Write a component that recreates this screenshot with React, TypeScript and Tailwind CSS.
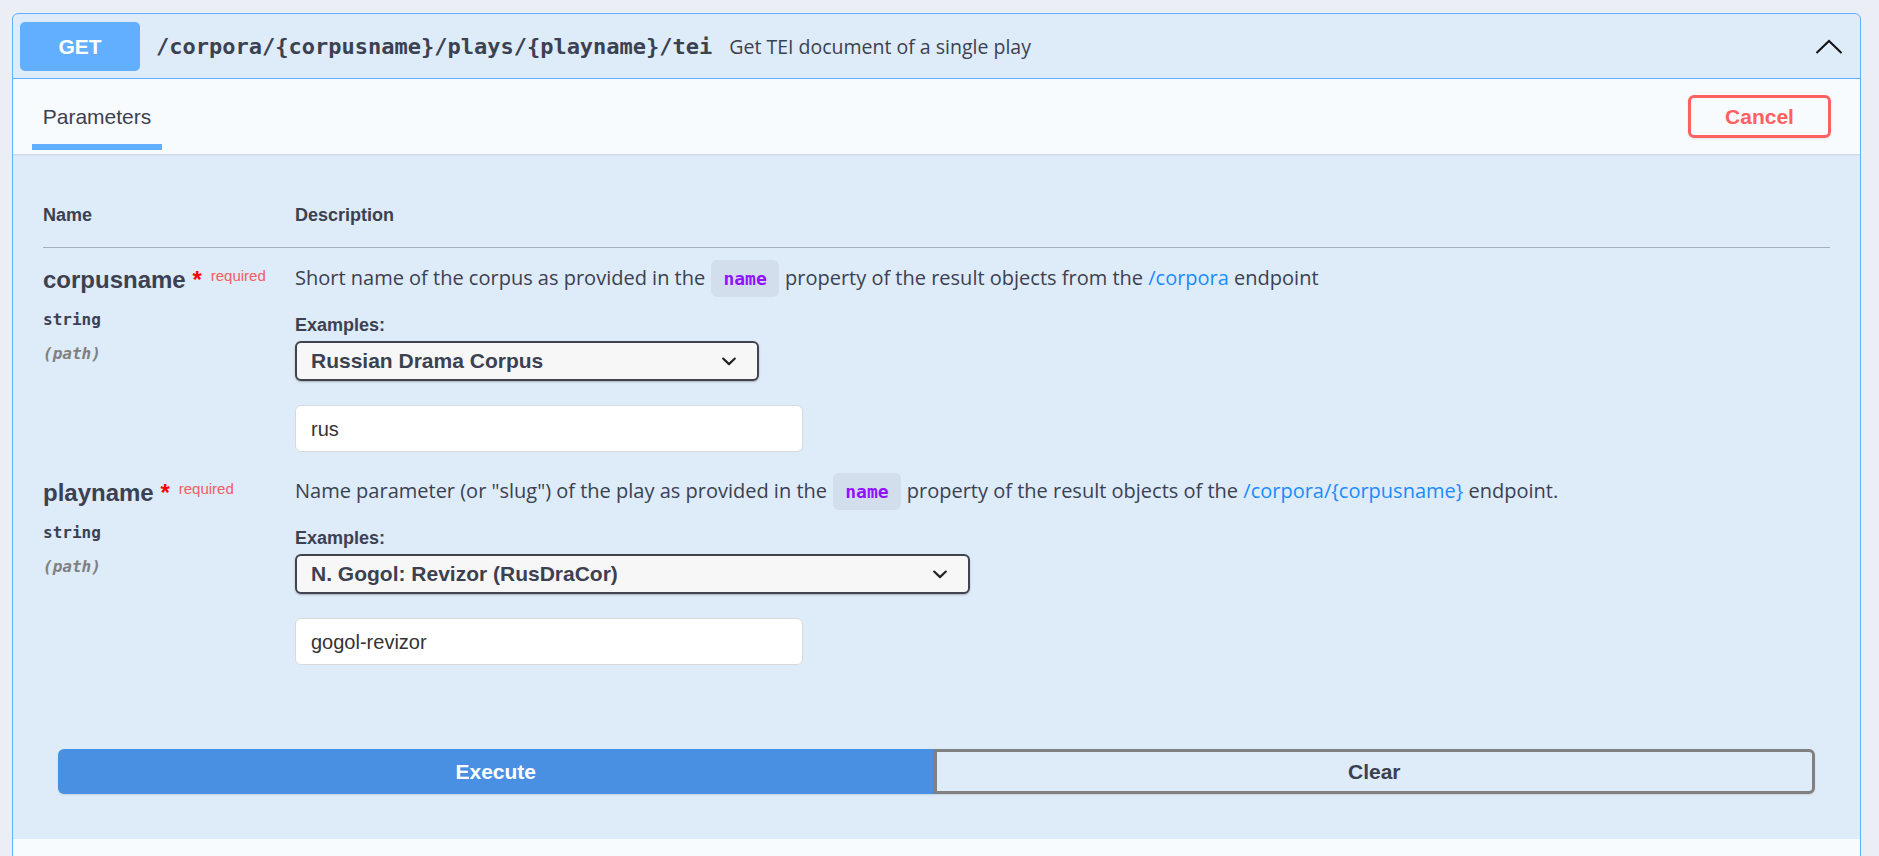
import React from "react";

const sans = "font-['Liberation_Sans',Arial,sans-serif]";
const open = "font-['Open_Sans',sans-serif]";
const mono = "font-['DejaVu_Sans_Mono',monospace]";

function Chip({ children }: { children: React.ReactNode }) {
  return (
    <span
      className={`${mono} mx-[1px] rounded-[6px] bg-[#d2deec] px-[12px] py-[8px] text-[18px] leading-[22px] font-bold text-[#9012fe]`}
    >
      {children}
    </span>
  );
}

function Link({ children }: { children: React.ReactNode }) {
  return <a className="text-[#1a8cff]">{children}</a>;
}

function SelectChevron() {
  return (
    <svg width="30" height="30" viewBox="0 0 20 20" className="shrink-0">
      <path
        fill="#222"
        d="M13.418 7.859a.695.695 0 0 1 .978 0 .68.68 0 0 1 0 .969l-3.908 3.83a.697.697 0 0 1-.979 0l-3.908-3.83a.68.68 0 0 1 0-.969.695.695 0 0 1 .978 0L10 11l3.418-3.141z"
      />
    </svg>
  );
}

type ParamProps = {
  name: string;
  description: React.ReactNode;
  example: string;
  selectWidth: string;
  value: string;
  top: string;
};

function ParamRow({ name, description, example, selectWidth, value, top }: ParamProps) {
  return (
    <div className={`flex ${top}`}>
      <div className="w-[252px] shrink-0">
        <div className={`${sans} mt-[2px] flex items-start text-[#3b4151]`}>
          <span className="text-[24px] leading-[30px] font-bold">
            {name}
            <span className="text-[#ff0000]">&nbsp;*</span>
          </span>
          <span className="ml-[9px] mt-[3px] text-[15px] leading-[15px] text-[#f25d63]">required</span>
        </div>
        <div className={`${mono} mt-[15px] text-[16px] leading-[20px] font-bold text-[#3b4151]`}>string</div>
        <div className={`${mono} mt-[14px] text-[16px] leading-[20px] italic font-bold text-[#808080]`}>(path)</div>
      </div>
      <div className="min-w-0 flex-1">
        <p className={`${open} text-[20px] leading-[30px] text-[#3b4151]`}>{description}</p>
        <div className={`${sans} mt-[22px] text-[18px] leading-[20px] font-bold text-[#3b4151]`}>Examples:</div>
        <div
          className={`${sans} mt-[6px] flex h-[40px] ${selectWidth} items-center justify-between rounded-[6px] border-2 border-[#41444e] bg-[#f7f7f7] pl-[14px] pr-[13px] text-[21px] font-bold text-[#3b4151] shadow-[0_1px_2px_rgba(0,0,0,0.25)]`}
        >
          <span>{example}</span>
          <SelectChevron />
        </div>
        <div
          className={`${sans} mt-[24px] flex h-[47px] w-[508px] items-center rounded-[6px] border border-[#d9d9d9] bg-white px-[15px] text-[20px] text-[#333]`}
        >
          {value}
        </div>
      </div>
    </div>
  );
}

export default function App() {
  return (
    <div className="min-h-screen bg-[#ebeef5] pl-[12px] pr-[18px] pt-[13px]">
      <div className="overflow-hidden rounded-[6px] border border-[#61affe] bg-[#deebf8]">
        {/* summary */}
        <div className="flex items-center border-b border-[#61affe] pb-[7px] pl-[7px] pr-[17px] pt-[8px]">
          <div
            className={`${sans} flex h-[49px] w-[120px] items-center justify-center rounded-[5px] bg-[#61affe] text-[21px] font-bold text-white`}
          >
            GET
          </div>
          <span className={`${mono} ml-[16px] text-[22px] font-bold text-[#3b4151]`}>
            /corpora/{"{corpusname}"}/plays/{"{playname}"}/tei
          </span>
          <span className={`${open} ml-[17px] text-[19.5px] text-[#3b4151]`}>Get TEI document of a single play</span>
          <svg width="28" height="16" viewBox="0 0 28 16" className="ml-auto">
            <polyline points="1.5,14 14,2 26.5,14" fill="none" stroke="#111" strokeWidth="2" />
          </svg>
        </div>

        {/* tab header */}
        <div className="relative flex items-center justify-between bg-[#f8fbfe] pl-[19px] pr-[29px] shadow-[0_1px_2px_rgba(0,0,0,0.1)]">
          <div className="flex w-[130px] flex-col items-center pt-[26px]">
            <span className={`${sans} text-[21px] leading-[24px] text-[#3b4151]`}>Parameters</span>
            <div className="mb-[4px] mt-[15px] h-[6px] w-full bg-[#61affe]" />
          </div>
          <button
            className={`${sans} flex h-[43px] w-[143px] items-center justify-center rounded-[6px] border-[3px] border-[#ff6060] bg-transparent text-[21px] font-bold text-[#ff6060] shadow-[0_1px_2px_rgba(0,0,0,0.1)]`}
          >
            Cancel
          </button>
        </div>

        {/* parameters */}
        <div className="px-[30px]">
          <div className={`${sans} flex border-b border-[#a6b0bd] pb-[22px] pt-[51px] text-[18px] leading-[20px] font-bold text-[#3b4151]`}>
            <div className="w-[252px]">Name</div>
            <div>Description</div>
          </div>
          <ParamRow
            top="pt-[15px]"
            name="corpusname"
            description={
              <>
                Short name of the corpus as provided in the <Chip>name</Chip> property of the result objects from the{" "}
                <Link>/corpora</Link> endpoint
              </>
            }
            example="Russian Drama Corpus"
            selectWidth="w-[464px]"
            value="rus"
          />
          <ParamRow
            top="pt-[24px]"
            name="playname"
            description={
              <>
                Name parameter (or "slug") of the play as provided in the <Chip>name</Chip> property of the result
                objects of the <Link>/corpora/{"{corpusname}"}</Link> endpoint.
              </>
            }
            example="N. Gogol: Revizor (RusDraCor)"
            selectWidth="w-[675px]"
            value="gogol-revizor"
          />
        </div>

        {/* execute */}
        <div className="flex px-[45px] pb-[45px] pt-[84px]">
          <button
            className={`${sans} h-[45px] flex-1 rounded-l-[6px] bg-[#4990e2] text-[21px] font-bold text-white shadow-[0_1px_2px_rgba(0,0,0,0.1)]`}
          >
            Execute
          </button>
          <button
            className={`${sans} h-[45px] flex-1 rounded-r-[6px] border-[3px] border-[#808080] bg-transparent text-[21px] font-bold text-[#3b4151] shadow-[0_1px_2px_rgba(0,0,0,0.1)]`}
          >
            Clear
          </button>
        </div>

        {/* responses header (below the fold) */}
        <div className="h-[76px] bg-[#f8fbfe] shadow-[0_1px_2px_rgba(0,0,0,0.1)]" />
        <div className="h-[120px]" />
      </div>
    </div>
  );
}
